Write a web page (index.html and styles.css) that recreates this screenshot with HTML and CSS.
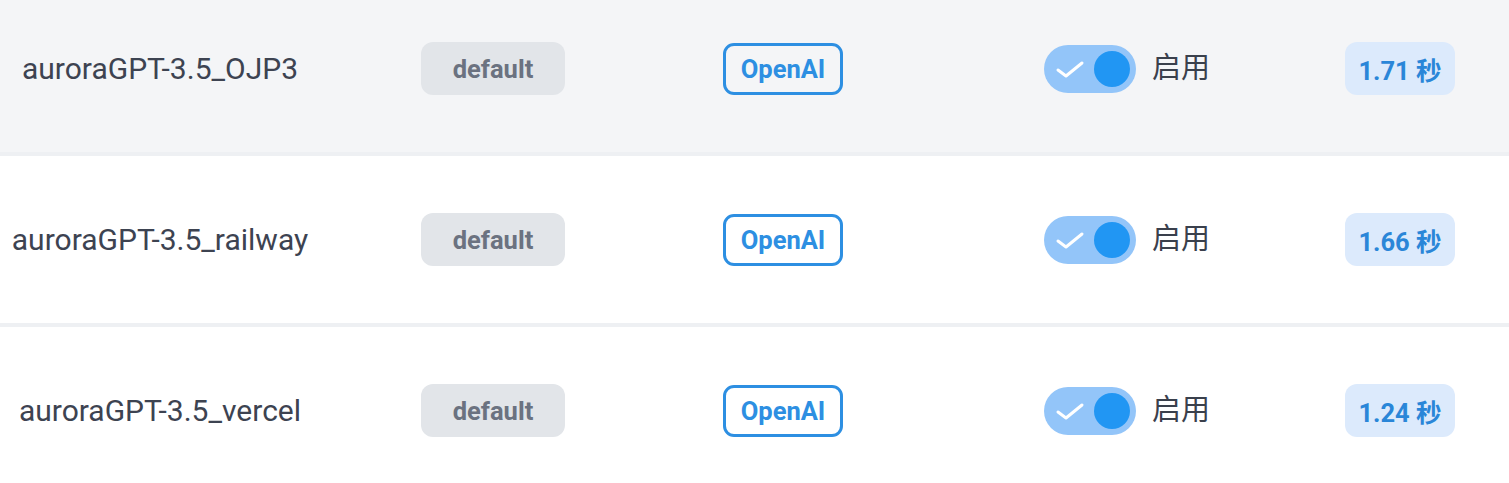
FILE: index.html
```html
<!DOCTYPE html>
<html lang="zh-CN">

<head>
    <meta charset="UTF-8">
    <meta name="viewport" content="width=device-width, initial-scale=1.0">
    <title>Channels</title>
    <link rel="stylesheet" href="styles.css">
</head>

<body>
    <div class="list">
        <div class="row hover">
            <div class="name">auroraGPT-3.5_OJP3</div>
            <div><span class="group">default</span></div>
            <div><span class="type">OpenAI</span></div>
            <div class="status">
                <span class="switch">
                    <svg class="check" width="48" height="48" viewBox="0 0 48 48"><polyline points="14,25 22,31 38,18" /></svg>
                    <span class="knob"></span>
                </span>
                <span class="label">启用</span>
            </div>
            <div><span class="time">1.71 秒</span></div>
        </div>
        <div class="row">
            <div class="name">auroraGPT-3.5_railway</div>
            <div><span class="group">default</span></div>
            <div><span class="type">OpenAI</span></div>
            <div class="status">
                <span class="switch">
                    <svg class="check" width="48" height="48" viewBox="0 0 48 48"><polyline points="14,25 22,31 38,18" /></svg>
                    <span class="knob"></span>
                </span>
                <span class="label">启用</span>
            </div>
            <div><span class="time">1.66 秒</span></div>
        </div>
        <div class="row">
            <div class="name">auroraGPT-3.5_vercel</div>
            <div><span class="group">default</span></div>
            <div><span class="type">OpenAI</span></div>
            <div class="status">
                <span class="switch">
                    <svg class="check" width="48" height="48" viewBox="0 0 48 48"><polyline points="14,25 22,31 38,18" /></svg>
                    <span class="knob"></span>
                </span>
                <span class="label">启用</span>
            </div>
            <div><span class="time">1.24 秒</span></div>
        </div>
    </div>
</body>

</html>
```

FILE: styles.css
```css
body {
    margin: 0;
    background-color: #fff;
    font-family: Roboto, "Noto Sans CJK SC", sans-serif;
    overflow: hidden;
}

.list {
    margin-top: -15px;
}

.row {
    display: grid;
    grid-template-columns: 320px 201px 220px 200px auto;
    column-gap: 101px;
    align-items: center;
    height: 167px;
    border-bottom: 4px solid #eef0f3;
    background-color: #fff;
}

.row.hover {
    background-color: #f4f5f7;
}

.name {
    text-align: center;
    font-size: 30px;
    color: #3d4351;
}

.group {
    display: inline-flex;
    align-items: center;
    justify-content: center;
    width: 144px;
    height: 53px;
    border-radius: 12px;
    background-color: #e2e5e9;
    color: #6b7280;
    font-weight: bold;
    font-size: 25.5px;
}

.type {
    display: inline-flex;
    align-items: center;
    justify-content: center;
    box-sizing: border-box;
    width: 120px;
    height: 52px;
    border: 3px solid #2d8fe2;
    border-radius: 11px;
    color: #2d8fe2;
    font-weight: bold;
    font-size: 25.5px;
}

.status {
    display: flex;
    align-items: center;
    gap: 16px;
}

.switch {
    position: relative;
    display: inline-block;
    width: 92px;
    height: 48px;
    border-radius: 24px;
    background-color: #93c5f9;
}

.check {
    position: absolute;
    left: 0;
    top: 0;
}

.check polyline {
    fill: none;
    stroke: #fff;
    stroke-width: 3;
    stroke-linecap: round;
    stroke-linejoin: round;
}

.knob {
    position: absolute;
    right: 6px;
    top: 6px;
    width: 36px;
    height: 36px;
    border-radius: 50%;
    background-color: #2196f3;
}

.label {
    font-family: "Noto Sans CJK SC", sans-serif;
    font-size: 29px;
    color: #3a404c;
    margin-top: -8px;
}

.time {
    display: inline-flex;
    align-items: center;
    justify-content: center;
    width: 110px;
    height: 53px;
    border-radius: 12px;
    background-color: #dceafc;
    color: #2a86d8;
    font-weight: bold;
    font-size: 25.5px;
}
```
